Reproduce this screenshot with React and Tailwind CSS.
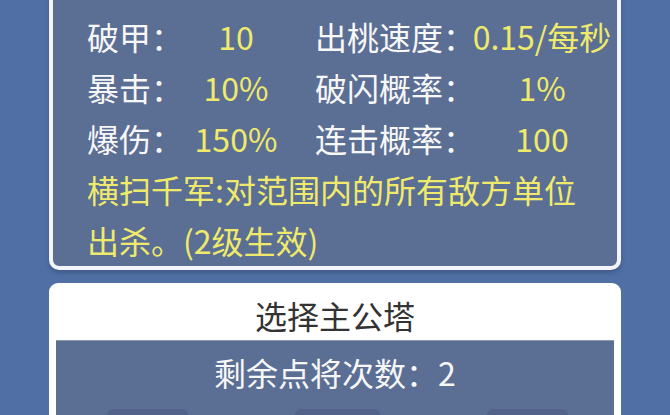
import React from 'react';

const stats = [
  ['破甲：', '10', '出桃速度：', '0.15/每秒'],
  ['暴击：', '10%', '破闪概率：', '1%'],
  ['爆伤：', '150%', '连击概率：', '100'],
];

const App = () => {
  return (
    <div
      className="w-[670px] h-[415px] overflow-hidden bg-[#4f6fa5] px-[49px] flex flex-col"
      style={{ fontFamily: '"Noto Sans CJK SC", "Noto Sans", sans-serif' }}
    >
      {/* Hero stats panel */}
      <div className="-mt-[20px] shrink-0 border-4 border-[#f3f5f8] rounded-[10px] bg-[#5b6e94] overflow-hidden pt-[27px] pl-[34px] shadow-[0_3px_4px_rgba(0,0,0,0.18)]">
        {stats.map((row) => (
          <div key={row[0]} className="flex text-[32px] leading-[51px] whitespace-nowrap">
            <span className="w-[107px] text-[#f7f7f7]">{row[0]}</span>
            <span className="w-[84px] text-center text-[#efea6b]">{row[1]}</span>
            <span className="w-[37px]" />
            <span className="w-[157px] text-[#f7f7f7]">{row[2]}</span>
            <span className="w-[140px] text-center text-[#efea6b]">{row[3]}</span>
          </div>
        ))}
        <p className="text-[32px] leading-[51px] text-[#efea6b] pr-[30px]">
          横扫千军:对范围内的所有敌方单位出杀。(2级生效)
        </p>
      </div>

      {/* Select tower panel */}
      <div className="mt-[13px] flex-1 bg-white rounded-t-[9px] px-[7px] flex flex-col">
        <div className="pt-[8px] text-center text-[32px] leading-[49px] text-[#333333]">
          选择主公塔
        </div>
        <div className="flex-1 bg-[#5b6e94] border-t border-[#8d97a8] flex flex-col">
          <div className="pt-[7px] text-center text-[32px] leading-[48px] text-[#f7f7f7]">
            剩余点将次数：2
          </div>
          <div className="mt-[13px] flex justify-center gap-[107px] pl-[4px]">
            <div className="w-[81px] h-[20px] rounded-t-[6px] bg-[#52628a]" />
            <div className="w-[85px] h-[20px] rounded-t-[6px] bg-[#52628a]" />
            <div className="w-[81px] h-[20px] rounded-t-[6px] bg-[#52628a]" />
          </div>
        </div>
      </div>
    </div>
  );
};

export default App;
